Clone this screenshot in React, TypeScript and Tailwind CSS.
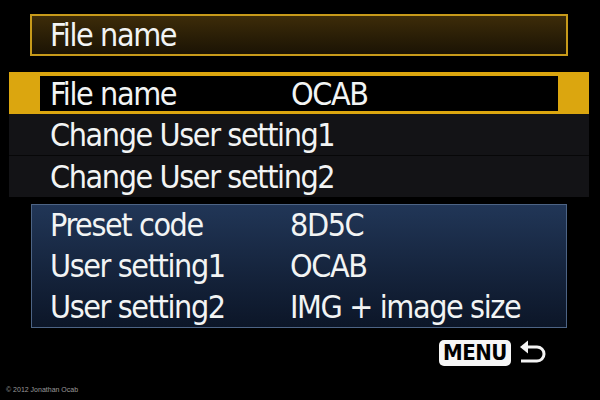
import React from "react";

const FONT = "font-['DejaVu_Sans_Condensed',sans-serif]";
const TXT = "text-[32px] leading-none tracking-[-1.4px]";

function ReturnArrow() {
  return (
    <svg width="30" height="28" viewBox="0 0 30 28" className="ml-[6px]">
      <path d="M3 8 L11 1.5 L11 14.5 Z" fill="#f4f4f4" />
      <path d="M9 8 H20 A7 7 0 0 1 20 22 H4" fill="none" stroke="#f4f4f4" strokeWidth="3" />
    </svg>
  );
}

export default function App() {
  return (
    <div className={`relative w-[600px] h-[400px] bg-black overflow-hidden flex flex-col ${FONT} text-[#f2f4f4]`}>
      {/* Title */}
      <div className="ml-[30px] mt-[14px] w-[538px] h-[42px] border-2 border-[#c79a1a] bg-gradient-to-b from-[#3d2c09] to-[#1b1304] flex items-center pl-[18px]">
        <span className={TXT}>File name</span>
      </div>

      {/* Menu rows */}
      <div className="ml-[9px] mt-[16px] w-[580px] flex flex-col">
        <div className="h-[42px] bg-[#dba60f] pt-[4px] pb-[3px] px-[31px]">
          <div className="h-full bg-black flex items-center pl-[10px]">
            <span className={`w-[241px] ${TXT}`}>File name</span>
            <span className={TXT}>OCAB</span>
          </div>
        </div>
        <div className="h-[42px] bg-[#131316] border-b border-[#070708] flex items-center pl-[41px]">
          <span className={TXT}>Change User setting1</span>
        </div>
        <div className="h-[41px] bg-[#131316] flex items-center pl-[41px]">
          <span className={TXT}>Change User setting2</span>
        </div>
      </div>

      {/* Info box */}
      <div className="ml-[31px] mt-[7px] w-[536px] h-[124px] border border-[#4d6485] bg-gradient-to-b from-[#213657] to-[#0c1628] flex flex-col pl-[18px]">
        {[
          ["Preset code", "8D5C"],
          ["User setting1", "OCAB"],
          ["User setting2", "IMG + image size"],
        ].map(([k, v]) => (
          <div key={k} className="h-[41px] flex items-center">
            <span className={`w-[240px] ${TXT}`}>{k}</span>
            <span className={TXT}>{v}</span>
          </div>
        ))}
      </div>

      {/* MENU return */}
      <div className="mt-[11px] flex items-center justify-end pr-[53px]">
        <div className="h-[26px] w-[72px] rounded-[5px] bg-[#f6f6f6] flex items-center justify-center">
          <span className="text-black font-bold text-[22px] leading-none tracking-[-0.5px]">MENU</span>
        </div>
        <ReturnArrow />
      </div>

      <div className="absolute left-[6px] top-[386px] text-[7px] leading-none text-[#9a9a9a] font-['Liberation_Sans',sans-serif]">
        © 2012 Jonathan Ocab
      </div>
    </div>
  );
}
